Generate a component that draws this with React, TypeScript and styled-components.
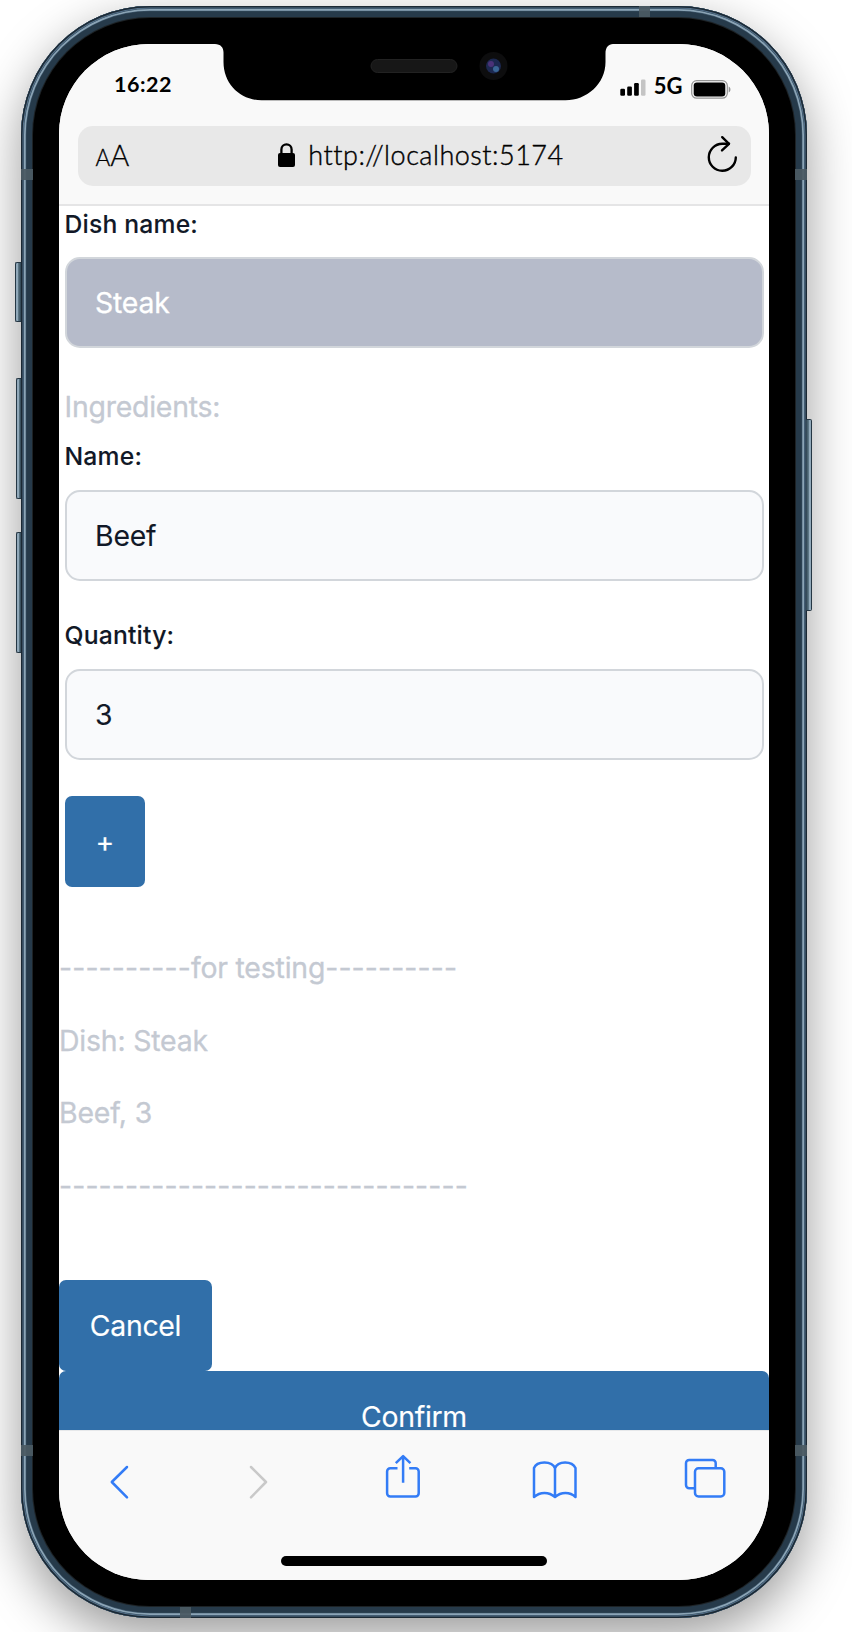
import React from "react";
import styled, { createGlobalStyle } from "styled-components";

const GlobalStyle = createGlobalStyle`
  *, *::before, *::after { box-sizing: border-box; }
  body { margin: 0; background: #fff; }
  p { margin: 0; }
`;

const Page = styled.div`
  width: 852px;
  height: 1632px;
  padding: 6px 0 0 21px;
  overflow: hidden;
`;

const Phone = styled.div`
  position: relative;
  width: 786px;
  height: 1612px;
  padding: 12px;
  border-radius: 129px;
  background: #263a4a;
  box-shadow:
    inset 0 0 0 1.5px #1b2934,
    inset 0 0 0 2.5px #54708a,
    inset 0 0 0 3px #31495b,
    inset 0 0 0 4.7px #8ba4b6,
    inset 0 0 0 5.3px #3b5366,
    0 18px 50px rgba(0, 0, 0, 0.4);
`;

const Bezel = styled.div`
  height: 100%;
  padding: 26px;
  border-radius: 117px;
  background: #000;
  box-shadow: 0 0 0 1px #1d2225;
`;

const Screen = styled.div`
  position: relative;
  display: flex;
  flex-direction: column;
  height: 100%;
  overflow: hidden;
  border-radius: 90px;
  background: #fff;
`;

const Band = styled.i<{ $x: number; $y: number; $across?: boolean }>`
  position: absolute;
  left: ${(p) => p.$x}px;
  top: ${(p) => p.$y}px;
  width: ${(p) => (p.$across ? 12 : 11)}px;
  height: 11px;
  background: #4b5a63;
  opacity: 0.93;
`;

const SideButton = styled.i<{ $y: number; $h: number; $right?: boolean; $w?: number }>`
  position: absolute;
  top: ${(p) => p.$y}px;
  ${(p) => (p.$right ? "left: 785px" : `left: ${-(p.$w ?? 5)}px`)};
  width: ${(p) => p.$w ?? 5}px;
  height: ${(p) => p.$h}px;
  border: 1px solid #253744;
  ${(p) => (p.$right ? "border-left: 0" : "border-right: 0")};
  border-radius: ${(p) => (p.$right ? "0 2px 2px 0" : "2px 0 0 2px")};
  background: linear-gradient(
    ${(p) => (p.$right ? "270deg" : "90deg")},
    #91a9ba 0 1.5px,
    #65808f 2px,
    #2c414f 100%
  );
`;

const Notch = styled.svg`
  position: absolute;
  left: 156px;
  top: 0;
`;

const Header = styled.header`
  height: 162px;
  flex: none;
  background: #f9f9f9;
  border-bottom: 2px solid #e5e5e6;
  font-family: Lato, sans-serif;
  color: #000;
`;

const StatusBar = styled.div`
  display: flex;
  justify-content: space-between;
  height: 82px;
  padding: 25px 38.5px 0 55px;
`;

const Clock = styled.span`
  font-size: 21.5px;
  line-height: 30px;
  font-weight: 700;
  letter-spacing: 0.5px;
`;

const StatusIcons = styled.div`
  display: flex;
  align-items: flex-start;
  padding-top: 1px;
`;

const Network = styled.span`
  margin: 0 8px 0 8px;
  font-size: 22px;
  line-height: 32px;
  font-weight: 700;
`;

const AddressBar = styled.div`
  display: flex;
  align-items: center;
  justify-content: space-between;
  height: 60px;
  margin: 0 18.5px;
  padding: 0 13px 0 18px;
  border-radius: 15px;
  background: #e8e8e8;
`;

const TextSize = styled.span`
  width: 38px;
  font-size: 29px;
  line-height: 60px;
  font-weight: 300;
  white-space: nowrap;
  -webkit-text-stroke: 0.3px currentColor;
  small { font-size: 22.5px; }
`;

const Address = styled.div`
  display: flex;
  align-items: center;
  gap: 13px;
  font-size: 27px;
  line-height: 56px;
  font-weight: 300;
  letter-spacing: 0.5px;
  margin: 0 0 3px 2px;
  -webkit-text-stroke: 0.4px currentColor;
`;

const Content = styled.main`
  flex: none;
  height: 1224px;
  overflow: hidden;
  font-family: Inter, sans-serif;
  font-size: 28.4px;
  line-height: 43.6px;
  color: #c4c9d2;
  -webkit-text-stroke: 0.3px currentColor;
`;

const Form = styled.form`
  padding: 0 5.5px 0 5.5px;
`;

const Label = styled.label`
  display: block;
  margin-bottom: 15px;
  font-size: 24.7px;
  line-height: 36.3px;
  font-weight: 500;
  letter-spacing: 0.2px;
  color: #111827;
  -webkit-text-stroke: 0.1px currentColor;
`;

const Field = styled.input<{ $filled?: boolean }>`
  display: block;
  width: 100%;
  height: 91px;
  margin-bottom: 36.6px;
  padding: 0 28.5px;
  border: 2px solid #d2d6db;
  border-radius: 15px;
  outline: none;
  background: ${(p) => (p.$filled ? "#b6bbca" : "#f9fafc")};
  color: ${(p) => (p.$filled ? "#fff" : "#111827")};
  font: inherit;
  font-weight: 400;
  letter-spacing: -0.2px;
  -webkit-text-stroke: ${(p) => (p.$filled ? 0.3 : 0.1)}px currentColor;
`;

const SectionTitle = styled.p`
  margin-bottom: 10px;
  letter-spacing: -0.22px;
`;

const Button = styled.button<{ $width: string }>`
  display: block;
  width: ${(p) => p.$width};
  height: 91px;
  padding: 0;
  border: 0;
  border-radius: 7px;
  background: #316fa9;
  color: #fff;
  font: inherit;
  line-height: 22px;
  letter-spacing: -0.3px;
  -webkit-text-stroke: 0.15px currentColor;
`;

const Debug = styled.section`
  display: flex;
  flex-direction: column;
  gap: 29.2px;
  margin: 58.5px 0 72.3px;
  white-space: nowrap;
`;

const Line = styled.p`
  letter-spacing: -0.18px;
`;

const Dashes = styled.span`
  letter-spacing: 0.13px;
`;

const Toolbar = styled.footer`
  flex: none;
  height: 150px;
  background: #f9f9f9;
  border-top: 1px solid #e6e8ea;
`;

const Actions = styled.nav`
  display: flex;
  height: 125px;
  padding: 23px 0 0 50px;
`;

const ActionIcon = styled.svg<{ $gap?: number; $muted?: boolean }>`
  flex: none;
  margin-left: ${(p) => p.$gap ?? 0}px;
  fill: none;
  stroke: ${(p) => (p.$muted ? "#c9c9c9" : "#337cf6")};
  stroke-width: 2.5;
  stroke-linejoin: round;
`;

const HomeIndicator = styled.div`
  width: 266px;
  height: 9.5px;
  margin: 0 auto;
  border-radius: 5px;
  background: #000;
`;

export default function App() {
  return (
    <>
      <GlobalStyle />
      <Page>
        <Phone>
          <SideButton $y={256} $h={60} $w={6} />
          <SideButton $y={372} $h={121} />
          <SideButton $y={526} $h={121} />
          <SideButton $y={413} $h={192} $right $w={6} />
          <Band $x={618} $y={0} />
          <Band $x={159} $y={1601} />
          <Band $x={0} $y={163} $across />
          <Band $x={774} $y={163} $across />
          <Band $x={0} $y={1439} $across />
          <Band $x={774} $y={1439} $across />
          <Bezel>
            <Screen>
              <Header>
                <StatusBar>
                  <Clock>16:22</Clock>
                  <StatusIcons>
                    <svg width="26" height="30" viewBox="0 0 26 30">
                      <rect x="0.3" y="18.7" width="4.7" height="7" rx="1.2" />
                      <rect x="7.2" y="16.5" width="4.7" height="9.2" rx="1.2" />
                      <rect x="14.1" y="13" width="4.7" height="12.7" rx="1.2" />
                      <rect x="21" y="9.5" width="4.5" height="16.2" rx="1.2" fill="#c4c4c4" />
                    </svg>
                    <Network>5G</Network>
                    <svg width="40" height="30" viewBox="0 0 40 30">
                      <rect x="0.7" y="10.6" width="35.6" height="17.6" rx="5" fill="none" stroke="#939393" strokeWidth="1.2" />
                      <rect x="2.7" y="12.4" width="31.6" height="14" rx="3.2" />
                      <path d="M37.7 16.5c2.3 1 2.3 5 0 6z" fill="#939393" />
                    </svg>
                  </StatusIcons>
                </StatusBar>
                <AddressBar>
                  <TextSize><small>A</small>A</TextSize>
                  <Address>
                    <svg width="17" height="24" viewBox="0 0 17 24">
                      <rect x="0" y="10" width="17" height="14" rx="2" />
                      <path d="M3.4 11V6.500a5.100 5.100 0 0 1 10.200 0V11" fill="none" stroke="#000" strokeWidth="2.3" />
                    </svg>
                    <span>http://localhost:5174</span>
                  </Address>
                  <svg width="31" height="44" viewBox="0 0 31 44" fill="none" stroke="#000" strokeWidth="2.4">
                    <path d="M15.200 3.200l6.800 6.600-7 6.600" strokeLinejoin="round" strokeLinecap="round" />
                    <path d="M22 9.800h-6.700A13.500 13.500 0 1 0 28.800 23.500" strokeLinecap="round" />
                  </svg>
                </AddressBar>
              </Header>
              <Content>
                <Form>
                  <Label>Dish name:</Label>
                  <Field $filled readOnly value="Steak" />
                  <SectionTitle>Ingredients:</SectionTitle>
                  <Label>Name:</Label>
                  <Field readOnly value="Beef" />
                  <Label>Quantity:</Label>
                  <Field readOnly value="3" />
                  <Button type="button" $width="80.5px">+</Button>
                </Form>
                <Debug>
                  <Line><Dashes>----------</Dashes>for testing<Dashes>----------</Dashes></Line>
                  <Line>Dish: Steak</Line>
                  <Line>Beef, 3</Line>
                  <Line><Dashes>-------------------------------</Dashes></Line>
                </Debug>
                <Button $width="153px">Cancel</Button>
                <Button $width="100%">Confirm</Button>
              </Content>
              <Toolbar>
                <Actions>
                  <ActionIcon width="20" height="46" viewBox="0 0 20 46" strokeLinecap="round">
                    <path d="M18 13L2.8 28l15.2 15.3" />
                  </ActionIcon>
                  <ActionIcon $gap={119.5} $muted width="20" height="46" viewBox="0 0 20 46" strokeLinecap="round">
                    <path d="M2 13l15 15L2 43.3" />
                  </ActionIcon>
                  <ActionIcon $gap={116.5} width="36" height="46" viewBox="0 0 36 46">
                    <path d="M12.5 14.2H5.3a3.2 3.2 0 0 0-3.2 3.2v21.9a3.2 3.2 0 0 0 3.2 3.2h25.2a3.2 3.2 0 0 0 3.2-3.2V17.4a3.2 3.2 0 0 0-3.2-3.2h-6.3" />
                    <path d="M18.1 28.8V2.5M10.8 9.2l7.3-7.1 7.3 7.1" />
                  </ActionIcon>
                  <ActionIcon $gap={111} width="46" height="46" viewBox="0 0 46 46" strokeLinejoin="miter">
                    <path d="M23 14.2C20 6.5 5 6.5 2 14v29c6-5.5 15-5.5 21 0 6-5.5 15-5.5 20.5 0V14C40 6.5 26 6.5 23 14.2V43" />
                  </ActionIcon>
                  <ActionIcon $gap={106} width="42" height="46" viewBox="0 0 42 46">
                    <path d="M11 34.2H5.2A3.2 3.2 0 0 1 2 31V9.3A3.2 3.2 0 0 1 5.200 6h23.300a3.200 3.200 0 0 1 3.200 3.300v5" />
                    <rect x="11" y="14.3" width="29.3" height="28.2" rx="3.5" />
                  </ActionIcon>
                </Actions>
                <HomeIndicator />
              </Toolbar>
              <Notch width="398" height="57" viewBox="0 0 398 57">
                <path d="M0 0c5.500 0 8.500 3.500 8.500 8.500V18c0 22 17 38.300 38 38.300h304c21 0 40-16.300 40-38.300V9.500c0-6 3-9.500 7.500-9.500z" />
                <rect x="156" y="15.500" width="86" height="13" rx="6.500" fill="#171717" stroke="#222" />
                <circle cx="278.500" cy="22" r="14" fill="#0d0d0e" />
                <circle cx="278.500" cy="22" r="7.500" fill="#1c2850" />
                <circle cx="276" cy="20" r="3" fill="#4a3278" />
                <circle cx="281" cy="25" r="3" fill="#3a6695" />
              </Notch>
            </Screen>
          </Bezel>
        </Phone>
      </Page>
    </>
  );
}
